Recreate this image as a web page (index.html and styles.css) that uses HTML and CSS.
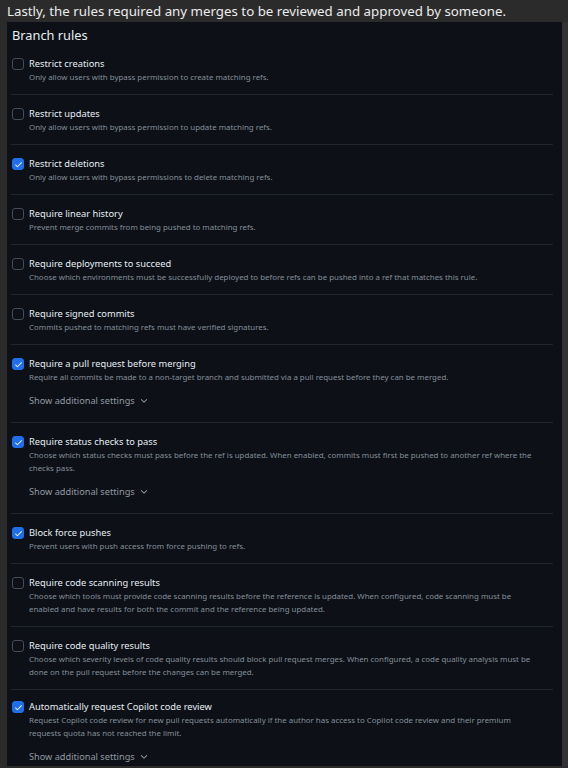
FILE: index.html
```html
<!DOCTYPE html>
<html lang="en">
<head>
    <meta charset="UTF-8">
    <meta name="viewport" content="width=device-width, initial-scale=1.0">
    <title>Branch rules</title>
    <link rel="stylesheet" href="styles.css">
</head>
<body>
    <p class="caption">Lastly, the rules required any merges to be reviewed and approved by someone.</p>

    <div class="frame">
        <div class="panel">
            <h2 class="panel-title">Branch rules</h2>

            <div class="rules">
                <div class="rule">
                    <span class="box"></span>
                    <div class="rule-body">
                        <div class="rule-name">Restrict creations</div>
                        <div class="rule-desc">Only allow users with bypass permission to create matching refs.</div>
                    </div>
                </div>

                <div class="rule">
                    <span class="box"></span>
                    <div class="rule-body">
                        <div class="rule-name">Restrict updates</div>
                        <div class="rule-desc">Only allow users with bypass permission to update matching refs.</div>
                    </div>
                </div>

                <div class="rule">
                    <span class="box checked"><svg viewBox="0 0 16 16"><path d="M13.78 4.22a.75.75 0 0 1 0 1.06l-7.25 7.25a.75.75 0 0 1-1.06 0L2.22 9.280a.75.75 0 0 1 1.06-1.06L6 10.94l6.72-6.72a.75.75 0 0 1 1.06 0Z"/></svg></span>
                    <div class="rule-body">
                        <div class="rule-name">Restrict deletions</div>
                        <div class="rule-desc">Only allow users with bypass permissions to delete matching refs.</div>
                    </div>
                </div>

                <div class="rule">
                    <span class="box"></span>
                    <div class="rule-body">
                        <div class="rule-name">Require linear history</div>
                        <div class="rule-desc">Prevent merge commits from being pushed to matching refs.</div>
                    </div>
                </div>

                <div class="rule">
                    <span class="box"></span>
                    <div class="rule-body">
                        <div class="rule-name">Require deployments to succeed</div>
                        <div class="rule-desc">Choose which environments must be successfully deployed to before refs can be pushed into a ref that matches this rule.</div>
                    </div>
                </div>

                <div class="rule">
                    <span class="box"></span>
                    <div class="rule-body">
                        <div class="rule-name">Require signed commits</div>
                        <div class="rule-desc">Commits pushed to matching refs must have verified signatures.</div>
                    </div>
                </div>

                <div class="rule">
                    <span class="box checked"><svg viewBox="0 0 16 16"><path d="M13.78 4.22a.75.75 0 0 1 0 1.06l-7.25 7.25a.75.75 0 0 1-1.06 0L2.22 9.280a.75.75 0 0 1 1.06-1.06L6 10.94l6.72-6.72a.75.75 0 0 1 1.06 0Z"/></svg></span>
                    <div class="rule-body">
                        <div class="rule-name">Require a pull request before merging</div>
                        <div class="rule-desc">Require all commits be made to a non-target branch and submitted via a pull request before they can be merged.</div>
                        <div class="more">Show additional settings <svg class="chevron" viewBox="0 0 16 16"><path d="M12.78 5.22a.749.749 0 0 1 0 1.06l-4.25 4.25a.749.749 0 0 1-1.06 0L3.22 6.28a.749.749 0 0 1 1.06-1.06L8 8.940l3.72-3.72a.749.749 0 0 1 1.06 0Z"/></svg></div>
                    </div>
                </div>

                <div class="rule">
                    <span class="box checked"><svg viewBox="0 0 16 16"><path d="M13.78 4.22a.75.75 0 0 1 0 1.06l-7.25 7.25a.75.75 0 0 1-1.06 0L2.22 9.280a.75.75 0 0 1 1.06-1.06L6 10.94l6.72-6.72a.75.75 0 0 1 1.06 0Z"/></svg></span>
                    <div class="rule-body">
                        <div class="rule-name">Require status checks to pass</div>
                        <div class="rule-desc">Choose which status checks must pass before the ref is updated. When enabled, commits must first be pushed to another ref where the checks pass.</div>
                        <div class="more">Show additional settings <svg class="chevron" viewBox="0 0 16 16"><path d="M12.78 5.22a.749.749 0 0 1 0 1.06l-4.25 4.25a.749.749 0 0 1-1.06 0L3.22 6.28a.749.749 0 0 1 1.06-1.06L8 8.940l3.72-3.72a.749.749 0 0 1 1.06 0Z"/></svg></div>
                    </div>
                </div>

                <div class="rule">
                    <span class="box checked"><svg viewBox="0 0 16 16"><path d="M13.78 4.22a.75.75 0 0 1 0 1.06l-7.25 7.25a.75.75 0 0 1-1.06 0L2.22 9.280a.75.75 0 0 1 1.06-1.06L6 10.94l6.72-6.72a.75.75 0 0 1 1.06 0Z"/></svg></span>
                    <div class="rule-body">
                        <div class="rule-name">Block force pushes</div>
                        <div class="rule-desc">Prevent users with push access from force pushing to refs.</div>
                    </div>
                </div>

                <div class="rule">
                    <span class="box"></span>
                    <div class="rule-body">
                        <div class="rule-name">Require code scanning results</div>
                        <div class="rule-desc">Choose which tools must provide code scanning results before the reference is updated. When configured, code scanning must be enabled and have results for both the commit and the reference being updated.</div>
                    </div>
                </div>

                <div class="rule">
                    <span class="box"></span>
                    <div class="rule-body">
                        <div class="rule-name">Require code quality results</div>
                        <div class="rule-desc">Choose which severity levels of code quality results should block pull request merges. When configured, a code quality analysis must be done on the pull request before the changes can be merged.</div>
                    </div>
                </div>

                <div class="rule">
                    <span class="box checked"><svg viewBox="0 0 16 16"><path d="M13.78 4.22a.75.75 0 0 1 0 1.06l-7.25 7.25a.75.75 0 0 1-1.06 0L2.22 9.280a.75.75 0 0 1 1.06-1.06L6 10.94l6.72-6.72a.75.75 0 0 1 1.06 0Z"/></svg></span>
                    <div class="rule-body">
                        <div class="rule-name">Automatically request Copilot code review</div>
                        <div class="rule-desc">Request Copilot code review for new pull requests automatically if the author has access to Copilot code review and their premium requests quota has not reached the limit.</div>
                        <div class="more">Show additional settings <svg class="chevron" viewBox="0 0 16 16"><path d="M12.78 5.22a.749.749 0 0 1 0 1.06l-4.25 4.25a.749.749 0 0 1-1.06 0L3.22 6.28a.749.749 0 0 1 1.06-1.06L8 8.940l3.72-3.72a.749.749 0 0 1 1.06 0Z"/></svg></div>
                    </div>
                </div>
            </div>
        </div>
        <div class="track"></div>
    </div>
</body>
</html>
```

FILE: styles.css
```css
body { margin: 0; background-color: #2b2b2b; font-family: "Noto Sans", "Open Sans", sans-serif; }
.caption { margin: 0; height: 22px; padding: 2px 0 0 7px; box-sizing: border-box; font-size: 13.3px; line-height: 18px; color: #ececec; }

.frame { display: flex; height: 744px; }
.panel { width: 555px; margin-left: 7px; padding: 0 9px 0 4px; box-sizing: border-box; background-color: #0d1117; overflow: hidden; }
.track { width: 6px; margin-left: auto; background-color: #323232; }

.panel-title { margin: 0; height: 22px; padding: 5px 0 0 1px; box-sizing: border-box; font-size: 12.8px; font-weight: normal; line-height: 16px; color: #e6edf3; }

.rule { display: grid; grid-template-columns: 18px 1fr; padding: 12px 0 10px; border-top: 1px solid #21262d; }
.rules .rule:first-child { border-top-color: transparent; }
.rules .rule:last-child { padding-top: 10px; }

.box { width: 12px; height: 12px; margin: 1px 0 0 1px; box-sizing: border-box; border: 1px solid #454c55; border-radius: 3px; display: flex; align-items: center; justify-content: center; }
.box.checked { background-color: #1f6feb; border-color: #1f6feb; }
.box svg { width: 9px; height: 9px; fill: #fff; }

.rule-body { padding-right: 12px; }
.rule-name { font-size: 9.3px; line-height: 14px; color: #e6edf3; }
.rule-desc { font-size: 7.9px; line-height: 13px; color: #848d97; }
.more { margin: 10px 0 4px; font-size: 9.2px; line-height: 14px; color: #9198a1; display: flex; align-items: center; }
.chevron { width: 10px; height: 10px; margin-left: 4px; fill: #9198a1; }
```
